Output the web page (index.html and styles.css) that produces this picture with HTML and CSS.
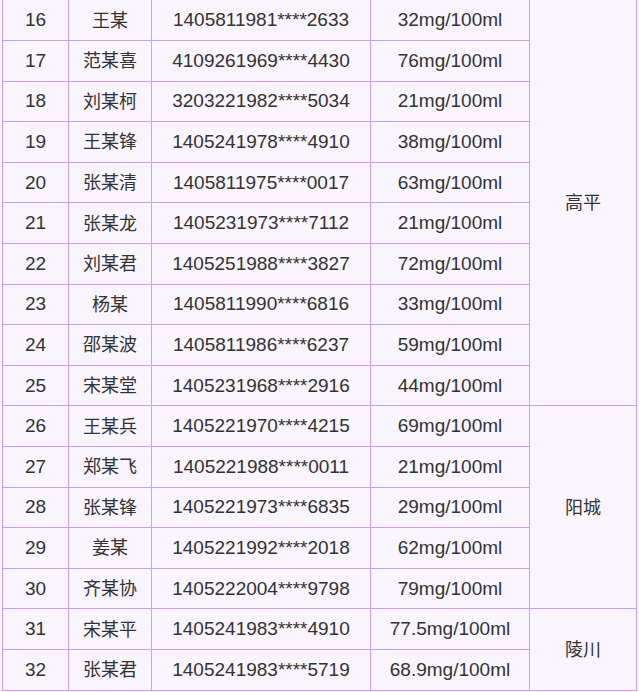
FILE: index.html
```html
<!DOCTYPE html>
<html lang="zh">
<head>
<meta charset="utf-8">
<link rel="stylesheet" href="styles.css">
</head>
<body>
<table class="list">
<colgroup>
<col class="c1"><col class="c2"><col class="c3"><col class="c4"><col class="c5">
</colgroup>
<tbody>
<tr><td>16</td><td class="cn">王某</td><td>1405811981****2633</td><td>32mg/100ml</td><td class="cn" rowspan="10">高平</td></tr>
<tr><td>17</td><td class="cn">范某喜</td><td>4109261969****4430</td><td>76mg/100ml</td></tr>
<tr><td>18</td><td class="cn">刘某柯</td><td>3203221982****5034</td><td>21mg/100ml</td></tr>
<tr><td>19</td><td class="cn">王某锋</td><td>1405241978****4910</td><td>38mg/100ml</td></tr>
<tr><td>20</td><td class="cn">张某清</td><td>1405811975****0017</td><td>63mg/100ml</td></tr>
<tr><td>21</td><td class="cn">张某龙</td><td>1405231973****7112</td><td>21mg/100ml</td></tr>
<tr><td>22</td><td class="cn">刘某君</td><td>1405251988****3827</td><td>72mg/100ml</td></tr>
<tr><td>23</td><td class="cn">杨某</td><td>1405811990****6816</td><td>33mg/100ml</td></tr>
<tr><td>24</td><td class="cn">邵某波</td><td>1405811986****6237</td><td>59mg/100ml</td></tr>
<tr><td>25</td><td class="cn">宋某堂</td><td>1405231968****2916</td><td>44mg/100ml</td></tr>
<tr><td>26</td><td class="cn">王某兵</td><td>1405221970****4215</td><td>69mg/100ml</td><td class="cn" rowspan="5">阳城</td></tr>
<tr><td>27</td><td class="cn">郑某飞</td><td>1405221988****0011</td><td>21mg/100ml</td></tr>
<tr><td>28</td><td class="cn">张某锋</td><td>1405221973****6835</td><td>29mg/100ml</td></tr>
<tr><td>29</td><td class="cn">姜某</td><td>1405221992****2018</td><td>62mg/100ml</td></tr>
<tr><td>30</td><td class="cn">齐某协</td><td>1405222004****9798</td><td>79mg/100ml</td></tr>
<tr><td>31</td><td class="cn">宋某平</td><td>1405241983****4910</td><td>77.5mg/100ml</td><td class="cn" rowspan="2">陵川</td></tr>
<tr><td>32</td><td class="cn">张某君</td><td>1405241983****5719</td><td>68.9mg/100ml</td></tr>
</tbody>
</table>
</body>
</html>
```
FILE: styles.css
```css
html, body {
  margin: 0;
  padding: 0;
  background: #f9f4fe;
}
.list {
  margin: -0.6px 0 0 2px;
  border-collapse: separate;
  border-spacing: 0;
  table-layout: fixed;
  width: 635px;
  border-left: 1px solid #d09cf0;
  border-top: 1px solid #d09cf0;
  font-family: "Liberation Sans", "Noto Sans CJK SC", sans-serif;
  font-size: 19px;
  line-height: 22px;
  color: #333;
}
.c1 { width: 66px; }
.c2 { width: 83px; }
.c3 { width: 219px; }
.c4 { width: 159px; }
.c5 { width: 107px; }
.list td {
  box-sizing: border-box;
  height: 40.6px;
  padding: 0;
  text-align: center;
  vertical-align: middle;
  border-right: 1px solid #d09cf0;
  border-bottom: 1px solid #d09cf0;
}
.list td.cn {
  font-family: "Noto Sans CJK SC", sans-serif;
  font-size: 18px;
  padding-bottom: 3px;
}
```
